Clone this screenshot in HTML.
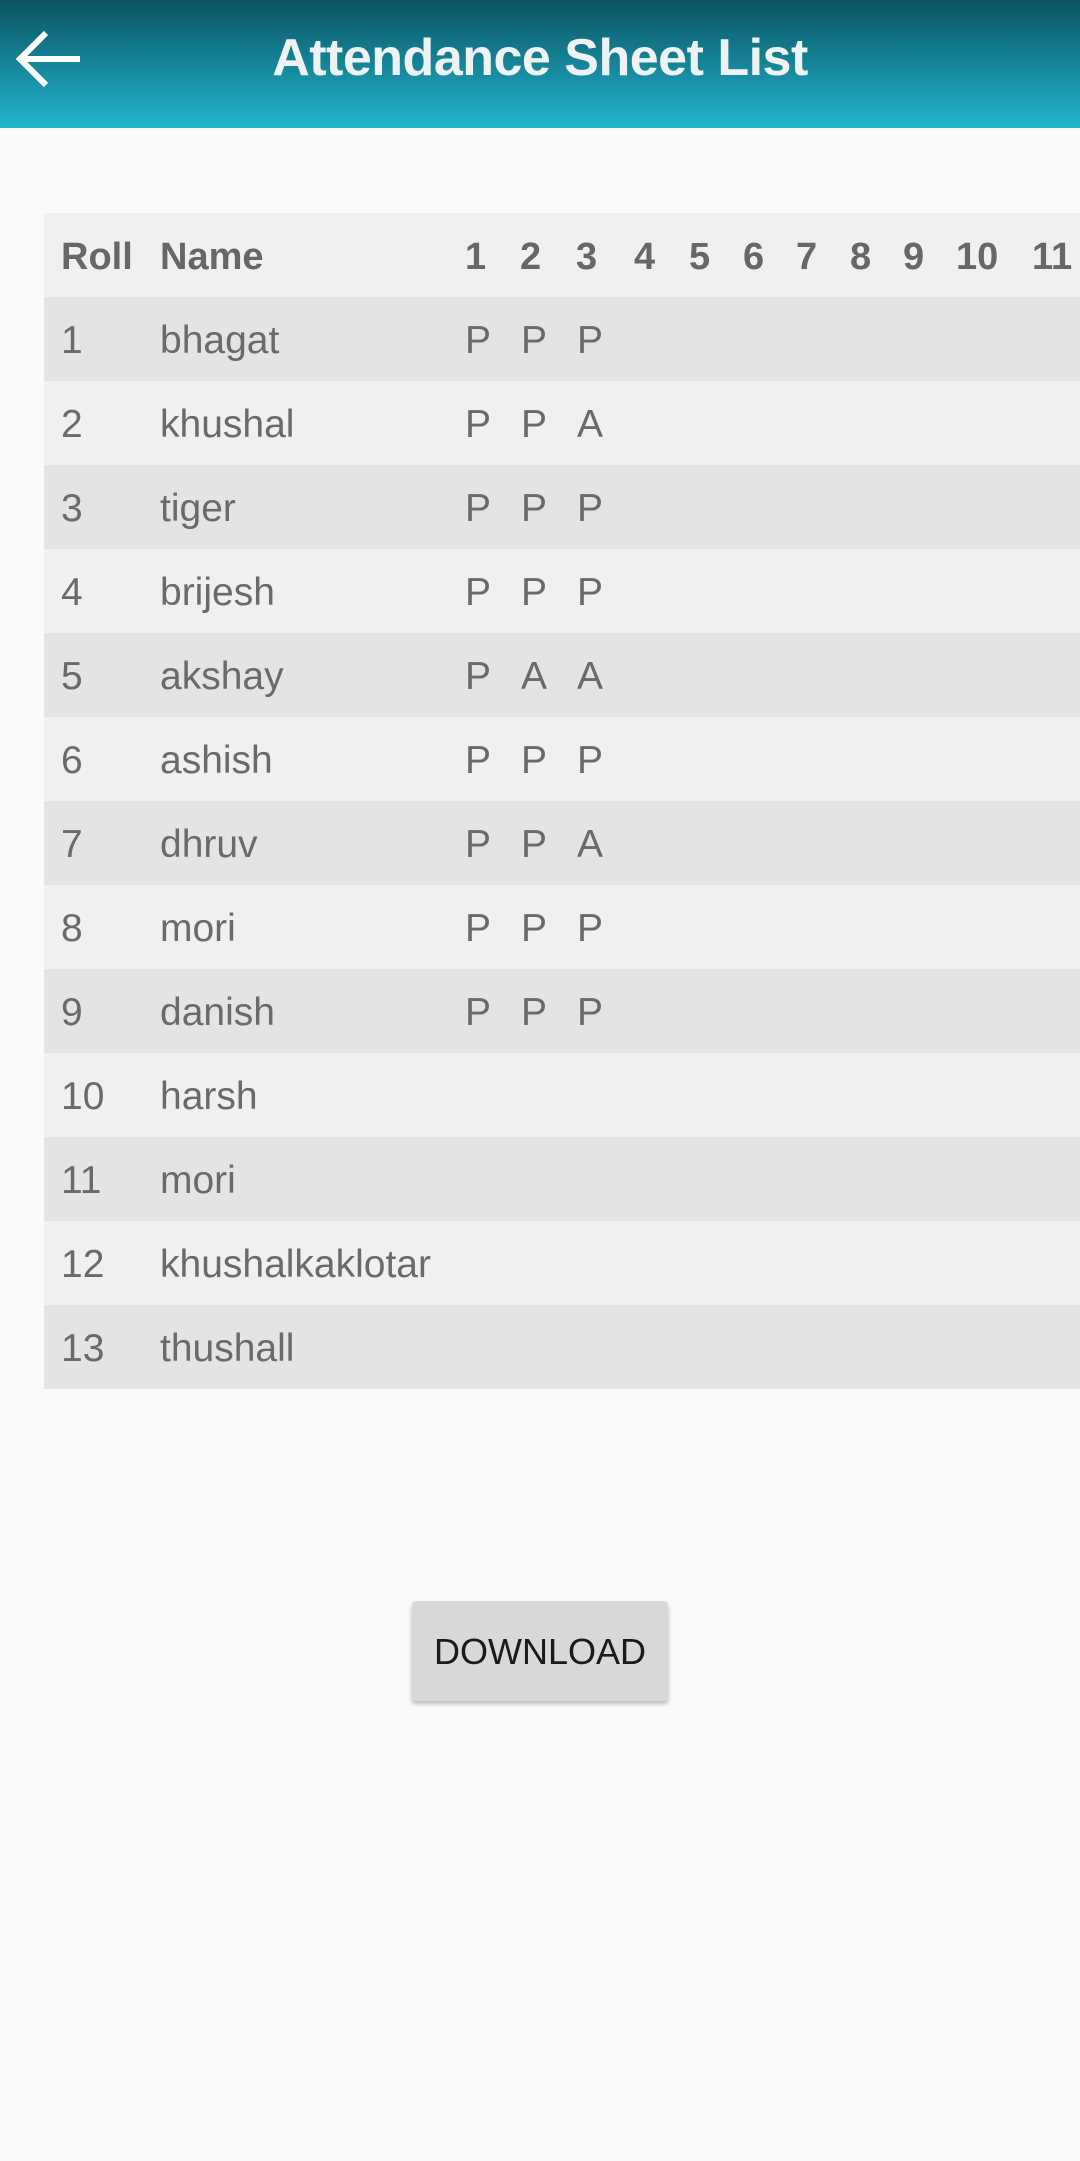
<!DOCTYPE html>
<html><head><meta charset="utf-8"><style>
*{margin:0;padding:0;box-sizing:border-box}
body{width:1080px;height:2161px;background:#fafafa;font-family:"Liberation Sans",sans-serif;overflow:hidden;position:relative}
.hdr{position:absolute;left:0;top:0;width:1080px;height:128px;background:linear-gradient(#0a5461,#22b5d0)}
.title{position:absolute;left:0;width:1080px;top:0;line-height:116px;text-align:center;color:#eef2f2;font-weight:bold;font-size:52px;letter-spacing:-0.5px}
.tbl{position:absolute;left:44px;top:213px;width:1036px}
.row{height:84px;position:relative;font-size:39px;color:#6a6a6a;line-height:88px}
.row span{position:absolute;top:0;white-space:nowrap}
.h{background:#f0f0f0;font-weight:bold;color:#676767;font-size:38px}
.o{background:#e4e4e4}.e{background:#f0f0f0}
.btn{position:absolute;left:412px;top:1601px;width:256px;height:100px;background:#d7d8d8;border-radius:4px;box-shadow:0 3px 4px rgba(0,0,0,.25);text-align:center;line-height:102px;font-size:36px;color:#1a1a1a}
</style></head><body>
<div class="hdr">
<svg style="position:absolute;left:14px;top:30px" width="70" height="60" viewBox="0 0 70 60"><path d="M4 29H66M32 3L6 29L32 55" stroke="#fff" stroke-width="6" fill="none"/></svg>
<div class="title">Attendance Sheet List</div>
</div>
<div class="tbl">
<div class="row h"><span style="left:17px">Roll</span><span style="left:116px">Name</span><span style="left:421px">1</span><span style="left:476px">2</span><span style="left:532px">3</span><span style="left:590px">4</span><span style="left:645px">5</span><span style="left:699px">6</span><span style="left:752px">7</span><span style="left:806px">8</span><span style="left:859px">9</span><span style="left:912px">10</span><span style="left:988px">11</span></div>
<div class="row o"><span style="left:17px">1</span><span style="left:116px">bhagat</span><span style="left:421px">P</span><span style="left:477px">P</span><span style="left:533px">P</span></div>
<div class="row e"><span style="left:17px">2</span><span style="left:116px">khushal</span><span style="left:421px">P</span><span style="left:477px">P</span><span style="left:533px">A</span></div>
<div class="row o"><span style="left:17px">3</span><span style="left:116px">tiger</span><span style="left:421px">P</span><span style="left:477px">P</span><span style="left:533px">P</span></div>
<div class="row e"><span style="left:17px">4</span><span style="left:116px">brijesh</span><span style="left:421px">P</span><span style="left:477px">P</span><span style="left:533px">P</span></div>
<div class="row o"><span style="left:17px">5</span><span style="left:116px">akshay</span><span style="left:421px">P</span><span style="left:477px">A</span><span style="left:533px">A</span></div>
<div class="row e"><span style="left:17px">6</span><span style="left:116px">ashish</span><span style="left:421px">P</span><span style="left:477px">P</span><span style="left:533px">P</span></div>
<div class="row o"><span style="left:17px">7</span><span style="left:116px">dhruv</span><span style="left:421px">P</span><span style="left:477px">P</span><span style="left:533px">A</span></div>
<div class="row e"><span style="left:17px">8</span><span style="left:116px">mori</span><span style="left:421px">P</span><span style="left:477px">P</span><span style="left:533px">P</span></div>
<div class="row o"><span style="left:17px">9</span><span style="left:116px">danish</span><span style="left:421px">P</span><span style="left:477px">P</span><span style="left:533px">P</span></div>
<div class="row e"><span style="left:17px">10</span><span style="left:116px">harsh</span></div>
<div class="row o"><span style="left:17px">11</span><span style="left:116px">mori</span></div>
<div class="row e"><span style="left:17px">12</span><span style="left:116px">khushalkaklotar</span></div>
<div class="row o"><span style="left:17px">13</span><span style="left:116px">thushall</span></div>
</div>
<div class="btn">DOWNLOAD</div>
</body></html>
